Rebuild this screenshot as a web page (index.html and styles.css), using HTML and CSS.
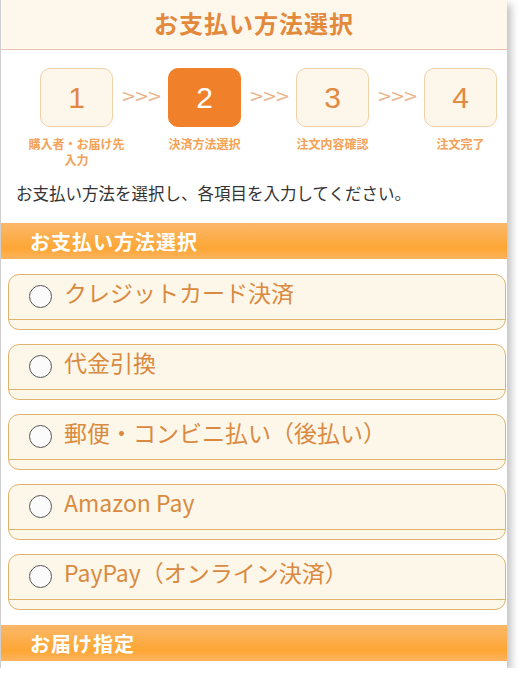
FILE: index.html
```html
<!DOCTYPE html>
<html lang="ja">
<head>
    <meta charset="UTF-8">
    <meta name="viewport" content="width=device-width, initial-scale=1.0">
    <title>お支払い方法選択</title>
    <link rel="stylesheet" href="styles.css">
</head>
<body>
    <div class="screen">
        <div class="page-header">
            <h1>お支払い方法選択</h1>
        </div>

        <div class="steps">
            <div class="step">
                <div class="step-box">1</div>
                <div class="step-label">購入者・お届け先<br>入力</div>
            </div>
            <div class="step-arrow">&gt;&gt;&gt;</div>
            <div class="step">
                <div class="step-box current">2</div>
                <div class="step-label">決済方法選択</div>
            </div>
            <div class="step-arrow">&gt;&gt;&gt;</div>
            <div class="step">
                <div class="step-box">3</div>
                <div class="step-label">注文内容確認</div>
            </div>
            <div class="step-arrow">&gt;&gt;&gt;</div>
            <div class="step">
                <div class="step-box">4</div>
                <div class="step-label">注文完了</div>
            </div>
        </div>

        <p class="intro">お支払い方法を選択し、各項目を入力してください。</p>

        <h2 class="section-title">お支払い方法選択</h2>

        <div class="pay-list">
            <div class="pay-item">
                <label class="pay-label"><span class="radio"></span>クレジットカード決済</label>
                <div class="pay-detail"></div>
            </div>
            <div class="pay-item">
                <label class="pay-label"><span class="radio"></span>代金引換</label>
                <div class="pay-detail"></div>
            </div>
            <div class="pay-item">
                <label class="pay-label"><span class="radio"></span>郵便・コンビニ払い（後払い）</label>
                <div class="pay-detail"></div>
            </div>
            <div class="pay-item">
                <label class="pay-label"><span class="radio"></span>Amazon Pay</label>
                <div class="pay-detail"></div>
            </div>
            <div class="pay-item">
                <label class="pay-label"><span class="radio"></span>PayPay（オンライン決済）</label>
                <div class="pay-detail"></div>
            </div>
        </div>

        <h2 class="section-title">お届け指定</h2>
    </div>
</body>
</html>
```

FILE: styles.css
```css
body {
    margin: 0;
    background: #fff;
    font-family: "Noto Sans CJK JP", "Liberation Sans", sans-serif;
}
.screen {
    width: 506px;
    height: 668px;
    overflow: hidden;
    background: #fff;
    border-left: 1px solid #cfcfcf;
    box-shadow: 4px 4px 8px rgba(0,0,0,0.25);
}
.page-header {
    height: 49px;
    background-color: #fdf7ec;
    border-bottom: 1px solid #e9c4b4;
    display: flex;
    justify-content: center;
    align-items: center;
}
.page-header h1 {
    margin: 0 0 4px 0;
    font-size: 24px;
    font-weight: bold;
    color: #e2893c;
    letter-spacing: 1px;
}
.steps {
    display: flex;
    justify-content: space-between;
    padding: 18px 10px 0 39px;
    height: 125px;
    box-sizing: border-box;
}
.step {
    width: 73px;
    display: flex;
    flex-direction: column;
    align-items: center;
}
.step-box {
    width: 73px;
    height: 59px;
    box-sizing: border-box;
    border: 1px solid #f1d2a8;
    border-radius: 10px;
    background-color: #fdf6ea;
    color: #e08a42;
    font-family: "Liberation Sans", Arial, sans-serif;
    font-size: 30px;
    display: flex;
    justify-content: center;
    align-items: center;
}
.step-box.current {
    background-color: #f0812a;
    border-color: #f0812a;
    color: #fff;
}
.step-label {
    width: 124px;
    margin-top: 9px;
    text-align: center;
    font-size: 12px;
    font-weight: bold;
    line-height: 16px;
    color: #f3a257;
}
.step-arrow {
    margin-top: 17px;
    color: #e9b68c;
    font-family: "DejaVu Sans", sans-serif;
    font-size: 18px;
    letter-spacing: -2px;
}
.intro {
    margin: 0;
    padding: 6px 15px 0;
    height: 48px;
    box-sizing: border-box;
    font-size: 16.5px;
    color: #333;
}
.section-title {
    margin: 0;
    height: 36px;
    padding-left: 29px;
    display: flex;
    align-items: center;
    font-size: 20px;
    font-weight: bold;
    letter-spacing: 1px;
    color: #fff;
    background: linear-gradient(to bottom, #fbb86a 0%, #fcae4c 40%, #fda634 70%, #fcb45e 100%);
}
.pay-list {
    display: flex;
    flex-direction: column;
    gap: 14px;
    padding: 15px 1px 15px 7px;
}
.pay-item {
    border: 1px solid #dfb36c;
    border-radius: 11px;
    background-color: #fdf7ea;
    overflow: hidden;
}
.pay-label {
    display: flex;
    align-items: center;
    height: 45px;
    padding: 0 0 10px 20px;
    box-sizing: border-box;
    border-bottom: 1px solid #dfb36c;
    font-size: 23px;
    color: #d98a40;
}
.radio {
    width: 21px;
    height: 21px;
    margin: 8px 12px 0 0;
    border: 1.5px solid #555;
    border-radius: 50%;
    background: #fbfbfb;
    flex-shrink: 0;
}
.pay-detail {
    height: 9px;
}
```
